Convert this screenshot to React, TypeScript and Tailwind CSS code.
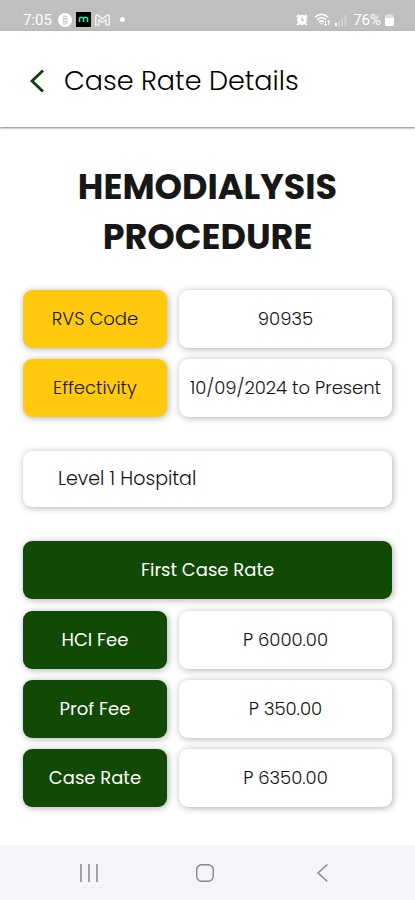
import React from "react";

type Tone = "gold" | "green";

const tones: Record<Tone, string> = {
  gold: "bg-[#ffc90e] text-[#171705]",
  green: "bg-[#104a04] text-white",
};

const card =
  "flex h-[58px] items-center justify-center rounded-[9px] text-lg shadow-[1px_1px_7px_rgba(0,0,0,0.32)]";

function Row({ label, value, tone }: { label: string; value: string; tone: Tone }) {
  return (
    <div className="flex gap-3">
      <dt className={`${card} w-[39%] shrink-0 ${tones[tone]} ${tone === "gold" ? "font-light" : "font-normal"}`}>
        {label}
      </dt>
      <dd className={`${card} min-w-0 flex-1 whitespace-nowrap bg-white font-light text-[#111]`}>{value}</dd>
    </div>
  );
}

function StatusBar() {
  return (
    <div className="flex h-[31px] items-center justify-between bg-[#bfbfbf] pl-[23px] pr-[21px] pt-2 text-[15px] leading-5 text-white">
      <div className="flex items-center gap-1">
        <span className="mr-0.5 font-['Roboto','Inter',sans-serif]">7:05</span>
        <svg width="14" height="14" viewBox="0 0 14 14" aria-hidden="true">
          <circle cx="7" cy="7" r="7" fill="#fff" />
          <path d="M9.5 4.2C8.8 2.8 5 2.7 5 4.7s4.4 1.5 4.4 3-3.4 1.6-4.6.3M9.4 6.2c0-2-4.4-.9-4.4 1s4.3 1 4.3 2.7-3.7 1.6-4.6.3" fill="none" stroke="#c4c4c4" />
        </svg>
        <svg width="15" height="15" viewBox="0 0 15 15" aria-hidden="true">
          <path d="M0 0h15v15H0z" fill="#000" />
          <path d="M3.5 10V7.2a2 2 0 0 1 4 0V10M7.5 7.2a2 2 0 0 1 4 0V10" fill="none" stroke="#3ddc97" strokeWidth="1.6" />
        </svg>
        <svg width="15" height="12" viewBox="0 0 15 12" aria-hidden="true">
          <path d="M.8 11V2.2C.8.8 2 .6 2.9 1.3L7.500 5l4.600-3.700c.9-.7 2.100-.5 2.100.9V11h-3.200V5.600L7.500 8.400 4 5.600V11z" fill="none" stroke="#fff" strokeWidth="1.2" strokeLinejoin="round" />
        </svg>
        <span className="ml-1.5 size-[5px] rounded-full bg-white" />
      </div>
      <div className="flex items-center gap-1">
        <svg width="12" height="12" viewBox="0 0 12 12" aria-hidden="true">
          <circle cx="6" cy="6" r="4.900" fill="#fff" />
          <path d="M.7 3 3 .8M11.300 3 9 .8M2.500 9.500 1.300 11.300M9.500 9.500l1.200 1.800" stroke="#fff" strokeWidth="1.700" />
          <path d="M6 3.200V6.300h2.200" fill="none" stroke="#bfbfbf" strokeWidth="1.200" />
        </svg>
        <svg className="ml-0.5" width="17" height="13" viewBox="0 0 17 13" aria-hidden="true">
          <path d="M1 4.200c4-3.800 9-3.800 13 0M3 6.700c3-2.700 6-2.700 9 0M5 9c1.700-1.500 3.300-1.500 5 0" fill="none" stroke="#fff" strokeWidth="1.500" />
          <path d="m6 10.200 1.500 1.500L9 10.200z" fill="#fff" />
          <path d="M11.500 8v4.500M10 11l1.500 1.500L13 11M14.800 12V7.500M13.300 9l1.500-1.500L16.300 9" fill="none" stroke="#fff" strokeWidth="1" />
        </svg>
        <svg className="mr-0.5" width="12" height="12" viewBox="0 0 12 12" aria-hidden="true">
          <path d="M0 9h2v3H0z" fill="#fff" />
          <path d="M3.300 7h1.700v5H3.300zM6.300 4.500H8V12H6.300zM9.500 1h1.700v11H9.500z" fill="#d3d3d3" />
        </svg>
        <span className="font-['Roboto','Inter',sans-serif]">76%</span>
        <svg width="9" height="12" viewBox="0 0 9 12" aria-hidden="true">
          <path d="M2.500 0h4v1.500h-4z" fill="#e0e0e0" />
          <rect y="1" width="9" height="11" rx="2" fill="#e0e0e0" />
          <path d="M0 4h9v6a2 2 0 0 1-2 2H2a2 2 0 0 1-2-2z" fill="#fff" />
        </svg>
      </div>
    </div>
  );
}

function NavigationBar() {
  return (
    <nav aria-label="System" className="mt-auto flex h-[55px] items-center justify-between bg-[#f4f5f8] pl-[18%] pr-[19%] text-[#85868a]">
      <button type="button" aria-label="Recent apps" className="flex w-7 justify-center">
        <svg width="18" height="18" viewBox="0 0 18 18" fill="none" stroke="currentColor" strokeWidth="1.500">
          <path d="M1 0v18M9 0v18M17 0v18" />
        </svg>
      </button>
      <button type="button" aria-label="Home" className="flex w-7 justify-center">
        <svg width="18" height="18" viewBox="0 0 18 18" fill="none" stroke="currentColor" strokeWidth="1.400">
          <rect x="0.700" y="0.700" width="16.600" height="16.600" rx="5" />
        </svg>
      </button>
      <button type="button" aria-label="Back" className="flex w-7 justify-center">
        <svg width="11" height="18" viewBox="0 0 11 18" fill="none" stroke="currentColor" strokeWidth="1.400">
          <path d="M10.300.5 1 9l9.300 8.500" />
        </svg>
      </button>
    </nav>
  );
}

export default function App() {
  return (
    <div className="flex min-h-screen flex-col bg-white font-['Poppins','Inter',sans-serif]">
      <StatusBar />
      <header className="flex h-24 items-center gap-5 px-[30px] pt-1 shadow-[0_1px_2px_rgba(0,0,0,0.5)]">
        <button type="button" aria-label="Go back" className="text-[#0b3d0b]">
          <svg width="14" height="24" viewBox="0 0 14 24" fill="none" stroke="currentColor" strokeWidth="2.800">
            <path d="M13 1.500 2 12l11 10.500" />
          </svg>
        </button>
        <h1 className="whitespace-nowrap text-[27px] font-light leading-10 text-black">Case Rate Details</h1>
      </header>
      <main className="px-[23px] pb-[38px] pt-[35px]">
        <h2 className="px-8 text-center text-[35px] font-bold leading-[50px] text-[#171717]">HEMODIALYSIS PROCEDURE</h2>
        <dl className="mt-7 flex flex-col gap-[11px]">
          <Row label="RVS Code" value="90935" tone="gold" />
          <Row label="Effectivity" value="10/09/2024 to Present" tone="gold" />
        </dl>
        <select
          aria-label="Hospital level"
          className="mt-[34px] block h-14 w-full appearance-none rounded-[9px] bg-white px-[35px] text-[19px] font-light text-[#111] shadow-[1px_1px_7px_rgba(0,0,0,0.32)]"
        >
          <option>Level 1 Hospital</option>
        </select>
        <section className="mt-[34px] flex flex-col gap-3">
          <h3 className={`${card} ${tones.green} font-normal`}>First Case Rate</h3>
          <dl className="flex flex-col gap-[11px]">
            <Row label="HCI Fee" value="P 6000.00" tone="green" />
            <Row label="Prof Fee" value="P 350.00" tone="green" />
            <Row label="Case Rate" value="P 6350.00" tone="green" />
          </dl>
        </section>
      </main>
      <NavigationBar />
    </div>
  );
}
